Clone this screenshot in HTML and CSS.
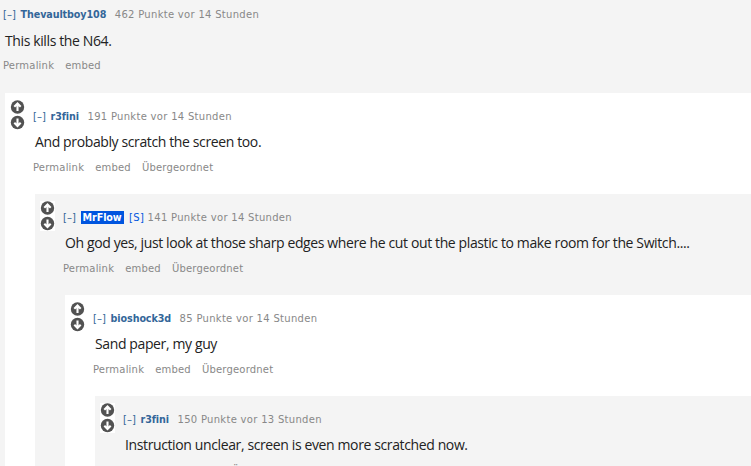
FILE: index.html
```html
<!DOCTYPE html>
<html lang="de">
<head>
<meta charset="utf-8">
<title>Kommentare</title>
<link rel="stylesheet" href="styles.css">
</head>
<body>
<div class="thread">
  <div class="comment root">
    <div class="entry">
      <p class="tagline"><a class="expand">[–]</a> <a class="author">Thevaultboy108</a> <span class="score">462 Punkte vor 14 Stunden</span></p>
      <div class="md">This kills the N64.</div>
      <ul class="buttons"><li>Permalink</li><li>embed</li></ul>
      <div class="child">
        <div class="comment even">
          <div class="midcol"><svg class="arrows" viewBox="0 0 15 30" width="15" height="30"><circle cx="7.5" cy="7" r="6.7"/><path d="M7.5 11V3.5M4.3 6.8L7.5 3.6L10.7 6.8"/><circle cx="7.5" cy="22.5" r="6.7"/><path d="M7.5 18.5V26M4.3 22.7L7.5 25.9L10.7 22.7"/></svg></div>
          <div class="entry">
            <p class="tagline"><a class="expand">[–]</a> <a class="author">r3fini</a> <span class="score">191 Punkte vor 14 Stunden</span></p>
            <div class="md">And probably scratch the screen too.</div>
            <ul class="buttons"><li>Permalink</li><li>embed</li><li>Übergeordnet</li></ul>
            <div class="child">
              <div class="comment odd">
                <div class="midcol"><svg class="arrows" viewBox="0 0 15 30" width="15" height="30"><circle cx="7.5" cy="7" r="6.7"/><path d="M7.5 11V3.5M4.3 6.8L7.5 3.6L10.7 6.8"/><circle cx="7.5" cy="22.5" r="6.7"/><path d="M7.5 18.5V26M4.3 22.7L7.5 25.9L10.7 22.7"/></svg></div>
                <div class="entry">
                  <p class="tagline"><a class="expand">[–]</a> <a class="author submitter">MrFlow</a> <span class="flag">[S]</span> <span class="score">141 Punkte vor 14 Stunden</span></p>
                  <div class="md">Oh god yes, just look at those sharp edges where he cut out the plastic to make room for the Switch....</div>
                  <ul class="buttons"><li>Permalink</li><li>embed</li><li>Übergeordnet</li></ul>
                  <div class="child">
                    <div class="comment even">
                      <div class="midcol"><svg class="arrows" viewBox="0 0 15 30" width="15" height="30"><circle cx="7.5" cy="7" r="6.7"/><path d="M7.5 11V3.5M4.3 6.8L7.5 3.6L10.7 6.8"/><circle cx="7.5" cy="22.5" r="6.7"/><path d="M7.5 18.5V26M4.3 22.7L7.5 25.9L10.7 22.7"/></svg></div>
                      <div class="entry">
                        <p class="tagline"><a class="expand">[–]</a> <a class="author">bioshock3d</a> <span class="score">85 Punkte vor 14 Stunden</span></p>
                        <div class="md">Sand paper, my guy</div>
                        <ul class="buttons"><li>Permalink</li><li>embed</li><li>Übergeordnet</li></ul>
                        <div class="child">
                          <div class="comment odd">
                            <div class="midcol"><svg class="arrows" viewBox="0 0 15 30" width="15" height="30"><circle cx="7.5" cy="7" r="6.7"/><path d="M7.5 11V3.5M4.3 6.8L7.5 3.6L10.7 6.8"/><circle cx="7.5" cy="22.5" r="6.7"/><path d="M7.5 18.5V26M4.3 22.7L7.5 25.9L10.7 22.7"/></svg></div>
                            <div class="entry">
                              <p class="tagline"><a class="expand">[–]</a> <a class="author">r3fini</a> <span class="score">150 Punkte vor 13 Stunden</span></p>
                              <div class="md">Instruction unclear, screen is even more scratched now.</div>
                              <ul class="buttons"><li>Permalink</li><li>embed</li><li>Übergeordnet</li></ul>
                            </div>
                          </div>
                        </div>
                      </div>
                    </div>
                  </div>
                </div>
              </div>
            </div>
          </div>
        </div>
      </div>
    </div>
  </div>
</div>
</body>
</html>
```

FILE: styles.css
```css
html, body {
  margin: 0;
  padding: 0;
}
body {
  background: #f4f4f4;
  overflow: hidden;
}
.thread {
  width: 100%;
}
.comment {
  display: flex;
  align-items: flex-start;
}
.comment.root {
  padding: 9px 0 0 3px;
}
.comment.even {
  background: #ffffff;
  padding-top: 7px;
}
.comment.odd {
  background: #f4f4f4;
  padding-top: 7px;
}
.midcol {
  flex: none;
  width: 15px;
  height: 30px;
  margin-left: 5px;
  margin-right: 8px;
  background: #ffffff;
}
.arrows {
  display: block;
}
.arrows circle {
  fill: #525252;
}
.arrows path {
  fill: none;
  stroke: #ffffff;
  stroke-width: 2.1;
  stroke-linecap: butt;
  stroke-linejoin: miter;
}
.entry {
  flex: 1;
  min-width: 0;
}
.comment.even > .entry,
.comment.odd > .entry {
  padding-top: 11px;
}
.tagline {
  margin: 0;
  font-family: "DejaVu Sans", Verdana, sans-serif;
  font-size: 10px;
  line-height: 12px;
  color: #888888;
  white-space: nowrap;
  letter-spacing: 0.3px;
}
.tagline .expand {
  color: #369;
  margin-right: 1px;
  letter-spacing: 0.1px;
}
.tagline .author {
  color: #369;
  font-weight: bold;
  margin-right: 5px;
  letter-spacing: -0.1px;
  font-size: 9.6px;
}
.tagline .author.submitter {
  background: #0055df;
  color: #ffffff;
  padding: 1px 2px;
  margin-right: 2px;
}
.tagline .flag {
  color: #0055df;
}
.md {
  margin: 9px 0 0 2px;
  font-family: "Open Sans", "Noto Sans", sans-serif;
  font-size: 14px;
  line-height: 20px;
  color: #222222;
  white-space: nowrap;
  letter-spacing: -0.38px;
}
.buttons {
  list-style: none;
  margin: 10px 0 0;
  padding: 0;
  display: flex;
  gap: 11px;
  font-family: "DejaVu Sans", Verdana, sans-serif;
  font-size: 10px;
  line-height: 12px;
  color: #888888;
  letter-spacing: 0.2px;
  white-space: nowrap;
}
.child {
  margin: 20px 0 0 2px;
}
.root > .entry > .md {
  margin-top: 10px;
}
.root > .entry > .buttons {
  margin-top: 9px;
}
.root > .entry > .child {
  margin-top: 21px;
}
```
